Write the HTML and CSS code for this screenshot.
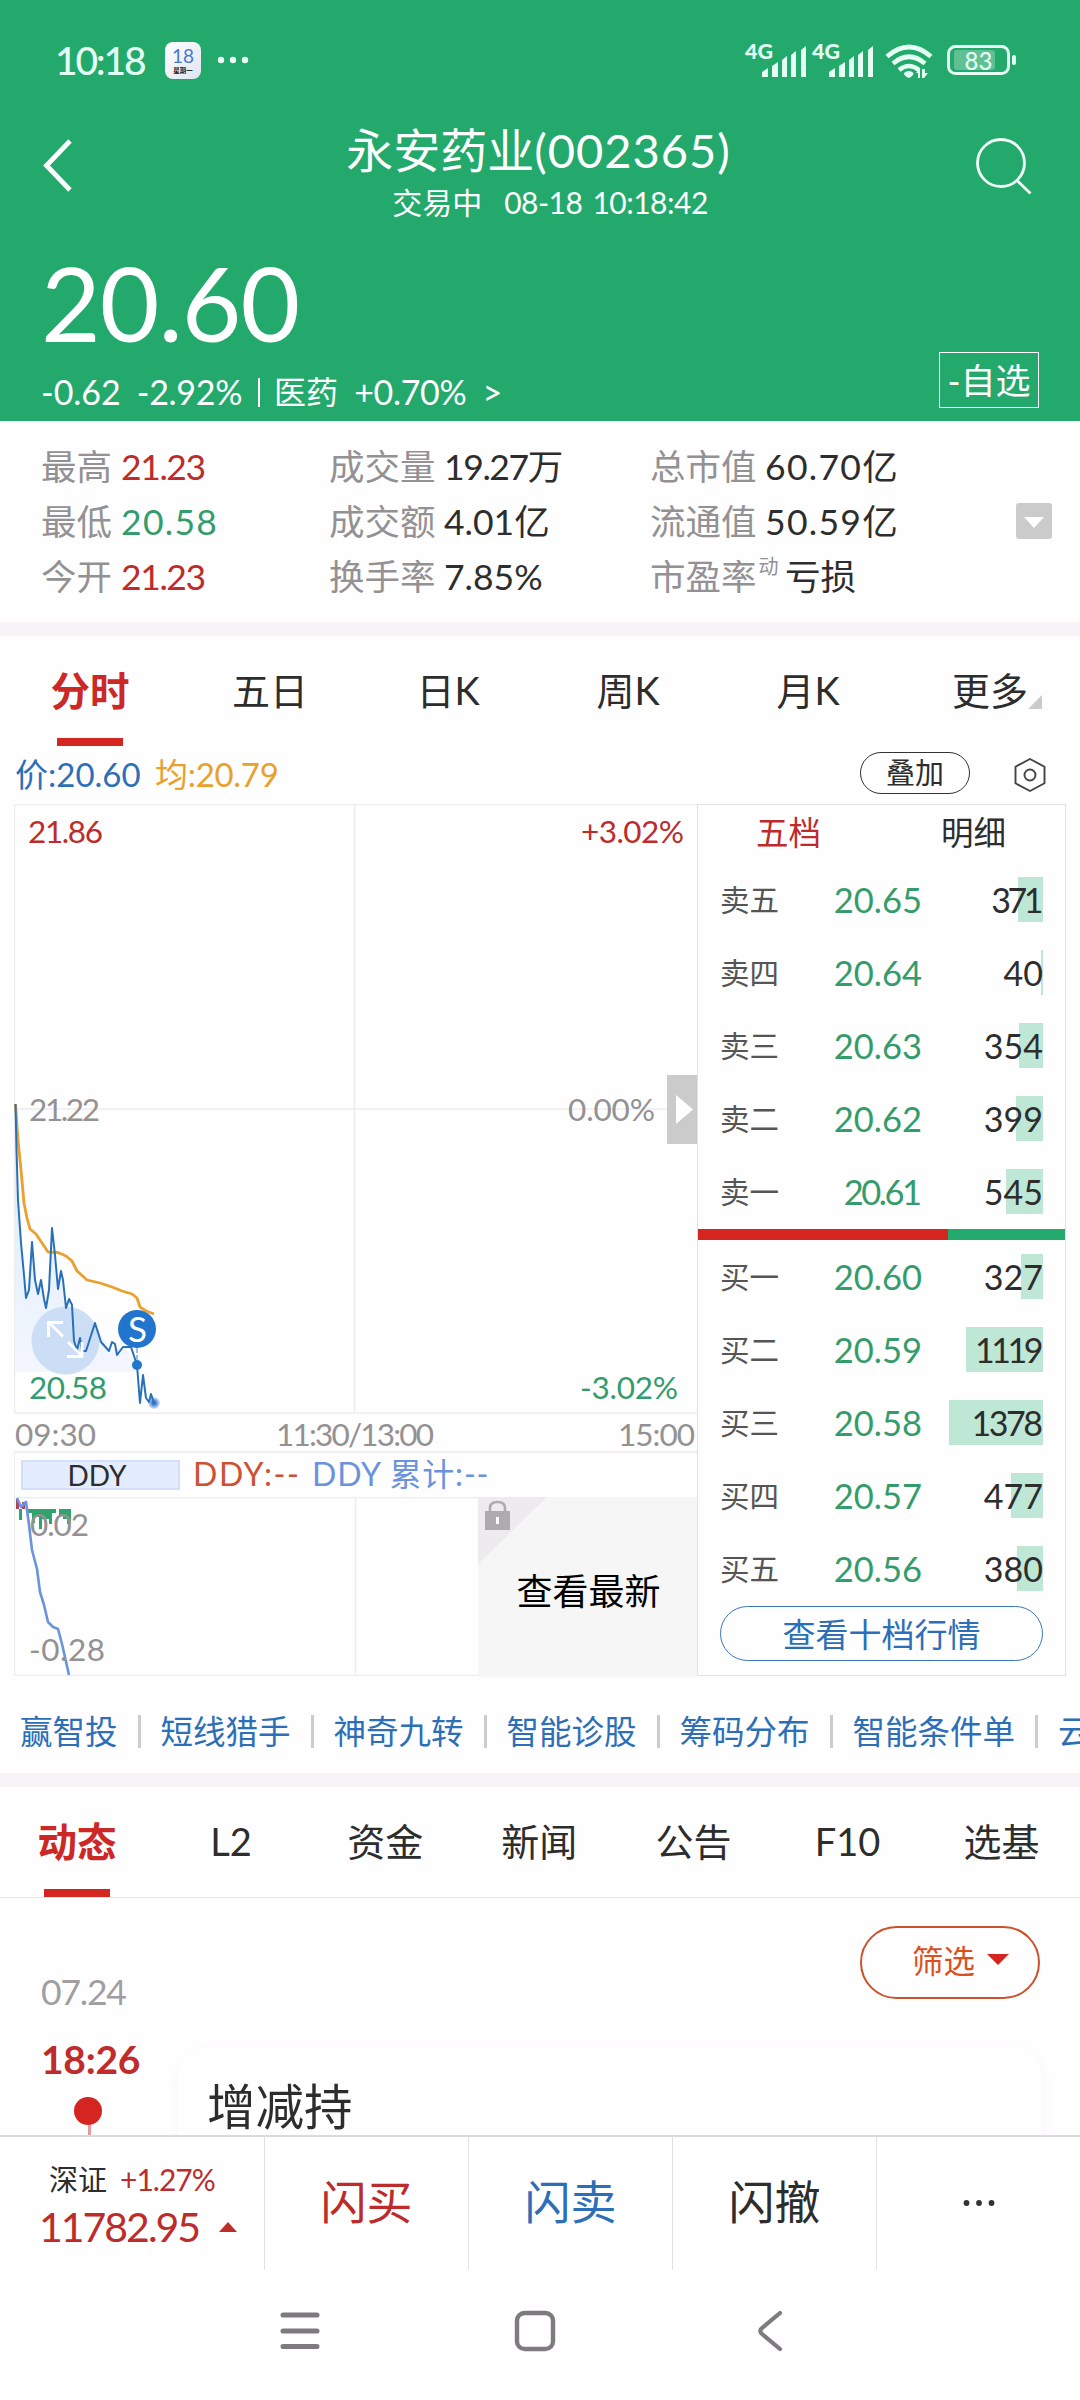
FILE: index.html
```html
<!DOCTYPE html>
<html lang="zh-CN">
<head>
<meta charset="utf-8">
<title>永安药业(002365)</title>
<link rel="stylesheet" href="styles.css">
</head>
<body>
<div class="page">
  <header class="header">
    <div class="status">
      <span class="clock">10:18</span>
      <span class="cal"><b>18</b><i>星期一</i></span>
      <svg class="more" width="32" height="8" viewBox="0 0 32 8"><g fill="#eafff5"><circle cx="4" cy="4" r="3.200"/><circle cx="16" cy="4" r="3.200"/><circle cx="28" cy="4" r="3.200"/></g></svg>
      <svg class="indicators" width="276" height="60" viewBox="742 30 276 60">
        <g fill="#e4fff3">
          <text class="net" x="745" y="58.500" textLength="28" lengthAdjust="spacingAndGlyphs">4G</text>
          <path d="M762 72l6-4v9h-6zM772 66l6-4v15h-6zM782 60l5-4v21h-5zM791 55l5-4v26h-5zM801 50l5-4v31h-5z"/>
          <g transform="translate(67 0)">
            <text class="net" x="745" y="58.500" textLength="28" lengthAdjust="spacingAndGlyphs">4G</text>
            <path d="M762 72l6-4v9h-6zM772 66l6-4v15h-6zM782 60l5-4v21h-5zM791 55l5-4v26h-5zM801 50l5-4v31h-5z"/>
          </g>
          <path d="M904 73q5-4 9.500 0q0 3-4.700 5q-4.800-2-4.800-5z"/>
          <path d="M918 78v-5h-2l4-5v10zM922 69h3v4h3l-4 5h-2z"/>
        </g>
        <g fill="none" stroke="#e4fff3" stroke-width="4.600">
          <path d="M887 56.500q22-19 44 0"/><path d="M893 63.500q16-13.500 32 0"/><path d="M899 70q10-8 20 0"/>
        </g>
        <rect x="948.500" y="46.500" width="60" height="27" rx="7" fill="none" stroke="#e4fff3" stroke-width="3"/>
        <rect x="954" y="50" width="41" height="20" rx="3" fill="#fff" opacity=".27"/>
        <rect x="1012" y="55" width="4" height="10" rx="2" fill="#e4fff3"/>
        <text class="charge" x="964.500" y="69.500" textLength="28">83</text>
      </svg>
    </div>
    <div class="titlebar">
      <svg class="back" width="34" height="60" viewBox="0 0 34 60"><path d="M30 6L6.500 30.500L30 55" fill="none" stroke="#fff" stroke-width="4.800"/></svg>
      <div class="titles">
        <h1><span>永安药业</span><span class="code">(002365)</span></h1>
        <p><span class="state">交易中</span><span>08-18</span><span>10:18:42</span></p>
      </div>
      <svg class="search" width="58" height="60" viewBox="0 0 58 60"><g fill="none" stroke="#f2fff9" stroke-width="2.800"><circle cx="26" cy="27" r="23.500"/><path d="M42 44.500L55.500 57.500"/></g></svg>
    </div>
    <div class="quote">
      <div>
        <div class="price">20.60</div>
        <div class="change"><span>-0.62</span><span class="pct">-2.92%</span><span class="bar"></span><span class="sector">医药</span><span class="pct">+0.70%</span><span class="gt">&gt;</span></div>
      </div>
      <button class="watch">-自选</button>
    </div>
  </header>

  <section class="stats">
    <dl><dt>最高</dt><dd class="up tight">21.23</dd><dt>最低</dt><dd class="down loose">20.58</dd><dt>今开</dt><dd class="up tight">21.23</dd></dl>
    <dl class="wide"><dt>成交量</dt><dd class="tight">19.27万</dd><dt>成交额</dt><dd>4.01亿</dd><dt>换手率</dt><dd>7.85%</dd></dl>
    <dl class="wide"><dt>总市值</dt><dd class="loose">60.70亿</dd><dt>流通值</dt><dd class="loose">50.59亿</dd><dt>市盈率<sup>动</sup></dt><dd class="loss">亏损</dd></dl>
    <svg class="expand" width="36" height="36" viewBox="0 0 36 36"><rect width="36" height="36" rx="3" fill="#cbcbcb"/><path d="M8 14h20L18 25z" fill="#fff"/></svg>
  </section>

  <nav class="periods">
    <a class="active">分时</a><a>五日</a><a class="k">日K</a><a class="k">周K</a><a class="k">月K</a><a class="morep">更多<i></i></a>
  </nav>

  <div class="legend">
    <span class="cur">价:20.60</span><span class="avg">均:20.79</span>
    <button class="overlay">叠加</button>
    <svg width="34" height="36" viewBox="0 0 34 36"><path d="M17 2L31.500 9.700V26.300L17 34L2.500 26.300V9.700z" fill="none" stroke="#444" stroke-width="1.900"/><circle cx="17" cy="18" r="5.500" fill="none" stroke="#444" stroke-width="1.900"/></svg>
  </div>

  <main class="board">
    <div class="charts">
      <svg class="intraday" width="683" height="610" viewBox="14 804 683 610">
        <defs>
          <linearGradient id="fade" x1="0" y1="0" x2="0" y2="1"><stop offset="0" stop-color="#cfe8f9"/><stop offset="1" stop-color="#f1f4fd"/></linearGradient>
          <radialGradient id="glow"><stop offset=".2" stop-color="#2a73c8"/><stop offset="1" stop-color="#2a73c8" stop-opacity=".15"/></radialGradient>
        </defs>
        <path d="M14 804.500H697M14.500 804V1413M14 1109H697M354.500 804V1413M14 1413H697" fill="none" stroke="#eeecee" stroke-width="1.500"/>
        <path fill="url(#fade)" opacity=".8" d="M15 1104L18 1200L26 1298L32 1242L37 1293L41 1281L46 1308L52 1228L58 1289L61 1271L66 1308L70 1300L75 1340L95 1324L110 1350L125 1347L137 1366V1372H15z"/>
        <path fill="none" stroke="#e9a02c" stroke-width="2.800" stroke-linejoin="round" d="M15.500 1104L18 1140L21 1170L24 1203L27 1218L30 1229L36 1234L42 1243L48 1252L58 1252.500L66 1256L72 1261L77 1271L87 1280L100 1283L112 1287L122 1291L132 1294L137 1298L140 1307L146 1311L154 1314"/>
        <circle cx="65.500" cy="1340.500" r="34" fill="#c4d9f3" opacity=".85"/>
        <path fill="none" stroke="#2a70b9" stroke-width="2" stroke-linejoin="round" d="M15.500 1104L16.500 1150L18 1200L21 1243L24 1275L26 1298L29 1290L32 1242L35 1280L38 1294L41 1280L44 1299L46 1308L49 1290L52 1228L55 1255L58 1289L61 1271L63 1280L66 1308L69 1299L72 1305L74 1341L77 1350L80 1338L82 1351L86 1351L95 1323L101 1342L109 1351L112 1342L115 1344L117 1355L123 1347L131 1347L137 1365L140 1403L143 1375L146 1398L149 1402L151 1394L154 1403"/>
        <g fill="none" stroke="#fff" stroke-width="2.800"><path d="M63 1336.500L49 1322.500M48.500 1337V1322.500H63M68 1342L82 1356M67 1356.500H82V1342"/></g>
        <path d="M137 1348V1360" stroke="#9fbde4" stroke-width="2" stroke-dasharray="5 2"/>
        <circle cx="137" cy="1329" r="19" fill="#2275cd"/><circle cx="137" cy="1365" r="5" fill="#2275cd"/><circle cx="154" cy="1403" r="6" fill="url(#glow)"/>
        <text class="sell" x="128" y="1341.500">S</text>
        <g class="axis">
          <text class="up" x="28" y="843" textLength="75">21.86</text><text class="up" x="684" y="843" text-anchor="end" textLength="103">+3.02%</text>
          <text x="29" y="1121" textLength="71">21.22</text><text x="655" y="1121" text-anchor="end" textLength="87">0.00%</text>
          <text class="down" x="29" y="1399" textLength="78">20.58</text><text class="down" x="678" y="1399" text-anchor="end" textLength="98">-3.02%</text>
        </g>
        <rect x="667" y="1075" width="30" height="69" fill="#cbcbcb"/><path d="M676 1095L693 1109.500L676 1124z" fill="#fff"/>
      </svg>
      <svg class="axis" width="683" height="39" viewBox="14 1414 683 39">
        <path d="M14 1452H697" stroke="#f0eef0" stroke-width="2"/>
        <text x="15" y="1446" textLength="81">09:30</text><text x="276" y="1446" textLength="158">11:30/13:00</text><text x="695" y="1446" text-anchor="end" textLength="77">15:00</text>
      </svg>
      <div class="indicator"><span class="name">DDY</span><span class="ddy">DDY:--</span><span class="sum">DDY 累计:--</span></div>
      <div class="lower">
        <svg width="464" height="179" viewBox="14 1497 464 179">
          <path d="M14.500 1497V1675.500H478M355.500 1497V1676M14 1497.500H478" fill="none" stroke="#eeecee" stroke-width="1.500"/>
          <path fill="#b04258" d="M16 1499h3v10h-3zM22 1502h3v7h-3z"/>
          <path fill="#2fa46f" d="M19 1509h3v11h-3zM27 1509h29v4h-4v11h-3v-5h-7v10h-3v-12h-4v6h-3v-10h-5zM59 1509h12v15h-4v-5h-4v-4h-4z"/>
          <path fill="none" stroke="#6b93dd" stroke-width="2.600" stroke-linejoin="round" d="M17 1498L21 1507L26 1502L29 1525L32 1550L37 1569L40 1592L44 1605L48 1622L53 1627L58 1629L62 1644L69 1675"/>
          <g class="axis"><text x="30" y="1536" textLength="59">0.02</text><text x="29" y="1661" textLength="76">-0.28</text></g>
        </svg>
        <div class="locked">
          <svg width="70" height="68" viewBox="0 0 70 68"><path d="M0 0H69L0 67z" fill="#eeebef"/><rect x="7" y="14" width="25" height="19" fill="#adabad"/><path d="M12 14v-3q0-6 7.500-6t7.500 6v3" fill="none" stroke="#adabad" stroke-width="2.600"/><path d="M19.500 20v7" stroke="#fff" stroke-width="3"/></svg>
          <span>查看最新</span>
        </div>
      </div>
    </div>

    <aside class="book">
      <div class="booktabs"><a class="up">五档</a><a>明细</a></div>
      <ul>
        <li><span>卖五</span><b>20.65</b><em class="ones tighter"><i style="width:25px"></i>371</em></li>
        <li><span>卖四</span><b>20.64</b><em><i style="width:2px"></i>40</em></li>
        <li><span>卖三</span><b>20.63</b><em><i style="width:24px"></i>354</em></li>
        <li><span>卖二</span><b>20.62</b><em><i style="width:27px"></i>399</em></li>
        <li><span>卖一</span><b class="ones">20.61</b><em><i style="width:37px"></i>545</em></li>
      </ul>
      <div class="ratio"><i style="width:250px"></i></div>
      <ul class="bids">
        <li><span>买一</span><b>20.60</b><em><i style="width:22px"></i>327</em></li>
        <li><span>买二</span><b>20.59</b><em class="ones tighter"><i style="width:77px"></i>1119</em></li>
        <li><span>买三</span><b>20.58</b><em class="ones"><i style="width:94px"></i>1378</em></li>
        <li><span>买四</span><b>20.57</b><em><i style="width:32px"></i>477</em></li>
        <li><span>买五</span><b>20.56</b><em><i style="width:26px"></i>380</em></li>
      </ul>
      <button class="depth">查看十档行情</button>
    </aside>
  </main>

  <div class="tools"><a>赢智投</a><a>短线猎手</a><a>神奇九转</a><a>智能诊股</a><a>筹码分布</a><a>智能条件单</a><a>云</a></div>

  <nav class="feedtabs"><a class="active">动态</a><a>L2</a><a>资金</a><a>新闻</a><a>公告</a><a>F10</a><a>选基</a></nav>

  <section class="feed">
    <div class="timeline">
      <div class="date">07.24</div>
      <div class="time">18:26</div>
      <i class="dot"></i><i class="stem"></i>
    </div>
    <div class="entries">
      <button class="filter">筛选<i></i></button>
      <article class="card">增减持</article>
    </div>
  </section>

  <footer class="trade">
    <div class="index">
      <div><span class="iname">深证</span><span class="up ipct">+1.27%</span></div>
      <div class="up"><span class="ival">11782.95</span><i></i></div>
    </div>
    <a class="up">闪买</a><a class="sellbtn">闪卖</a><a>闪撤</a>
    <a><svg width="32" height="8" viewBox="0 0 32 8"><g fill="#333"><circle cx="3.500" cy="4" r="2.900"/><circle cx="16" cy="4" r="2.900"/><circle cx="28.500" cy="4" r="2.900"/></g></svg></a>
  </footer>

  <div class="sysnav">
    <svg width="40" height="44" viewBox="0 0 40 44"><path d="M3 6H37M3 22H37M3 37.500H37" stroke="#7d7b7d" stroke-width="5" stroke-linecap="round"/></svg>
    <svg width="44" height="44" viewBox="0 0 44 44"><rect x="4" y="4" width="36" height="36" rx="7.500" fill="none" stroke="#7d7b7d" stroke-width="4.400"/></svg>
    <svg width="30" height="44" viewBox="0 0 30 44"><path d="M25 4L6.500 19.500Q4 22 6.500 24.500L25 40" fill="none" stroke="#7d7b7d" stroke-width="4.200" stroke-linecap="round"/></svg>
  </div>
</div>
</body>
</html>
```
FILE: styles.css
```css
* { box-sizing: border-box; margin: 0; padding: 0; }
body { background: #fff; color: #2d2d2d; font-family: Lato, "Noto Sans CJK SC", sans-serif; }
i, em { font-style: normal; }
b, h1 { font-weight: 400; }
ul { list-style: none; }
button { font-family: inherit; background: none; color: inherit; cursor: pointer; }
svg { display: block; flex: none; }
.page { width: 1080px; height: 2400px; overflow: hidden; display: flex; flex-direction: column; background: #fefefe; }
.page > * { flex: none; }
.up { color: #bd2b2b; fill: #bd2b2b; }
.down { color: #349c6b; fill: #349c6b; }

.header { height: 421px; background: #23a96b; color: #fff; }
.status { height: 120px; padding: 0 62px 0 55px; display: flex; align-items: center; }
.clock { width: 110px; font-size: 39px; letter-spacing: -2.200px; color: #e4fff3; font-weight: 500; }
.cal { width: 36px; height: 37px; border-radius: 8px; background: linear-gradient(135deg, #fff, #dfe4ee); display: flex; flex-direction: column; align-items: center; padding-top: 4px; }
.cal b { font-size: 19px; line-height: 20px; color: #4778cf; }
.cal i { font-size: 6.500px; line-height: 9px; color: #222; font-weight: 700; }
.more { margin-left: 16px; }
.indicators { margin-left: auto; }
.net { font: 900 21px Lato; }
.charge { font: 500 24px Lato; fill: #e4fff3; }
.titlebar { height: 130px; padding: 0 51px 0 40px; display: flex; align-items: flex-start; justify-content: space-between; }
.back { margin-top: 15px; }
.search { margin-top: 16px; margin-right: -4px; }
.titles { width: 400px; padding-left: 28px; white-space: nowrap; }
.titles h1 { font-size: 47px; line-height: 60px; display: flex; justify-content: center; }
.code { letter-spacing: 1px; }
.titles p { display: flex; justify-content: center; gap: 10px; padding-left: 23px; font-size: 30px; line-height: 45px; letter-spacing: -.5px; }
.titles p .state { margin-right: 12px; letter-spacing: 0; }
.quote { display: flex; justify-content: space-between; padding: 0 41px 0 41px; }
.price { font-size: 103px; line-height: 105px; height: 115px; letter-spacing: -1px; }
.change { display: flex; align-items: center; font-size: 34px; line-height: 54px; }
.change .pct { margin-left: 16px; letter-spacing: -.3px; }
.bar { width: 2px; height: 29px; background: #fff; margin: 0 14px 0 16px; }
.sector { font-size: 32px; }
.gt { margin-left: 16px; }
.watch { width: 100px; height: 56px; margin-top: 102px; border: 1px solid #fff; font-size: 35px; line-height: 49px; white-space: nowrap; }

.stats { height: 215px; border-bottom: 14px solid #f7f3f7; padding: 18px 28px 0 41px; display: flex; font-size: 35.500px; line-height: 55px; }
.stats dl { width: 288px; display: grid; grid-template-columns: 80px 1fr; height: 165px; white-space: nowrap; }
.stats dl.wide { width: 321px; grid-template-columns: 115px 1fr; }
.stats dt { color: #939193; }
.stats .tight { letter-spacing: -1.400px; }
.stats .loose { letter-spacing: 1.300px; }
.stats sup { font-size: 20px; line-height: 1; vertical-align: 16px; margin-left: 2px; }
.stats .loss { padding-left: 20px; }
.expand { margin: 64px 0 0 auto; }

.periods { height: 110px; display: grid; grid-template-columns: repeat(6, 180px); font-size: 38px; line-height: 109px; text-align: center; }
.periods a { position: relative; }
.periods .k { padding-right: 4px; }
.periods .active, .feedtabs .active { font-size: 39.500px; font-weight: 700; color: #cc2826; position: relative; }
.active::after { content: ""; position: absolute; left: 50%; bottom: 0; width: 66px; height: 8px; margin-left: -33px; background: #d42521; }
.morep i { position: absolute; right: 38px; top: 59px; border: 7px solid; border-color: transparent #cbcbcb #cbcbcb transparent; }
.legend { height: 58px; padding: 0 33px 0 15px; display: flex; align-items: center; font-size: 33px; line-height: 56px; }
.legend span { height: 58px; }
.cur { color: #2c6fb8; width: 140px; }
.avg { color: #e9a02c; letter-spacing: -.3px; }
.overlay { width: 110px; height: 42px; border: 1.500px solid #333; border-radius: 21px; font-size: 29px; line-height: 34px; margin: -4px 43px 0 auto; }

.board { height: 872px; padding: 0 14px; display: flex; }
.charts { width: 683px; }
.axis text { font: 400 31.500px Lato; fill: #939193; }
.axis .up { fill: #bd2b2b; }
.axis .down { fill: #349c6b; }
.sell { font: 400 35px Lato; fill: #fff; }
.indicator { height: 44px; padding-left: 6px; border-left: 1px solid #eeecee; display: flex; align-items: center; font-size: 32px; line-height: 42px; white-space: nowrap; }
.indicator .ddy, .indicator .sum { height: 44px; }
.name { width: 159px; height: 30px; background: #e4ecff; border: 2px solid #d4dffa; text-align: center; padding-right: 7px; font-size: 28px; line-height: 26px; }
.ddy { color: #ce5133; margin-left: 13px; width: 119px; letter-spacing: 1.600px; }
.sum { color: #6b93dd; letter-spacing: .8px; }
.lower { display: flex; }
.locked { width: 219px; height: 180px; background: #f6f6f6; color: #000; font-size: 36px; display: flex; flex-direction: column; }
.locked span { line-height: 53px; padding-left: 2px; text-align: center; }

.book { width: 369px; height: 872px; border: 1px solid #e3e1e3; }
.booktabs { height: 58px; padding: 0 0 0 58px; display: flex; gap: 120px; font-size: 32.500px; line-height: 55px; }
.book li { height: 73px; padding: 0 22px 0 22px; display: grid; grid-template-columns: 56px 146px 1fr; line-height: 73px; font-size: 34px; }
.book li span { font-size: 29.500px; color: #555; white-space: nowrap; }
.book li b { color: #349c6b; text-align: right; font-size: 34.500px; }
.book li .ones { letter-spacing: -2.500px; padding-right: 2.500px; }
.book li .tighter { letter-spacing: -3.500px; padding-right: 3px; }
.book li em { position: relative; text-align: right; display: flex; align-items: center; justify-content: flex-end; isolation: isolate; }
.book li em i { position: absolute; right: 0; top: 14px; height: 45px; background: #bfe7d6; z-index: -1; }
.ratio { height: 11px; background: #23a96b; margin-top: 1px; }
.ratio i { display: block; height: 11px; background: #d42521; }
.depth { display: block; width: 323px; height: 55px; margin: 1px 0 0 22px; border: 1.500px solid #3a76b8; border-radius: 28px; color: #2c6fb8; font-size: 33px; line-height: 48px; }

.tools { height: 111px; border-bottom: 14px solid #f7f3f7; padding: 14px 0 0 20px; display: flex; align-items: center; font-size: 32.500px; line-height: 90px; color: #2c6fb8; white-space: nowrap; overflow: hidden; }
.tools a { display: flex; align-items: center; flex: none; }
.tools a + a::before { content: ""; width: 3px; height: 33px; background: #ccc; margin: 0 20px; }

.feedtabs { height: 111px; border-bottom: 1px solid #e8e6e8; display: grid; grid-template-columns: repeat(7, 154.100px); font-size: 38px; line-height: 109px; text-align: center; }

.feed { height: 237px; display: flex; overflow: hidden; }
.timeline { width: 178px; padding: 68px 0 0 41px; }
.date { font-size: 35.500px; line-height: 52px; color: #a09ea0; letter-spacing: -1.200px; }
.time { font-size: 39px; line-height: 56px; margin: 13px 0 10px; font-weight: 700; color: #c02b2b; letter-spacing: -.3px; }
.dot { display: block; width: 28px; height: 28px; border-radius: 50%; background: #d42521; margin-left: 33px; }
.stem { display: block; width: 3px; height: 20px; background: #e39a9a; margin-left: 47px; }
.entries { width: 864px; }
.filter { display: flex; align-items: center; width: 180px; height: 73px; margin: 28px 2px 0 auto; padding: 0 0 7px 50px; border: 2px solid #c9532b; border-radius: 37px; color: #dc501e; font-size: 31.500px; white-space: nowrap; }
.filter i { margin: 1px 0 0 12px; border: 11px solid transparent; border-top-color: #d42521; border-bottom: 0; }
.card { height: 140px; margin-top: 48px; padding: 0 29px; border-radius: 30px; background: #fefefe; box-shadow: 0 4px 12px 2px #fcf6fd; font-size: 48.500px; line-height: 118px; }

.trade { height: 135px; border-top: 2px solid #dcdadc; display: grid; grid-template-columns: 264px repeat(4, 204px); background: #fff; font-size: 46px; line-height: 130px; }
.trade > a { border-left: 1px solid #e2e0e2; display: flex; justify-content: center; align-items: flex-start; }
.trade > a svg { margin-top: 62px; }
.index { padding: 19px 0 0 39px; }
.sellbtn { color: #2c6fb8; }
.index div { display: flex; align-items: center; height: 47px; line-height: 47px; white-space: nowrap; }
.iname { font-size: 29px; margin-left: 10px; width: 71px; }
.ipct { font-size: 30px; letter-spacing: -1px; }
.ival { font-size: 41px; letter-spacing: -2px; width: 180px; }
.index i { border: 9px solid transparent; border-bottom: 10px solid #c02b2b; border-top: 0; }
.sysnav { height: 130px; padding: 39px 0 0 280px; display: flex; background: #fefefe; }
.sysnav svg:nth-child(2) { margin-left: 193px; }
.sysnav svg:nth-child(3) { margin-left: 198px; }
```
